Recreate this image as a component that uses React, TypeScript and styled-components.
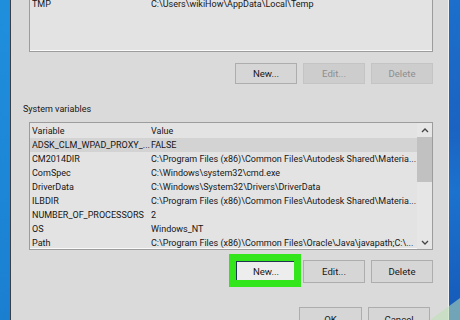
import React from "react";
import styled, { createGlobalStyle } from "styled-components";

const Global = createGlobalStyle`
  html, body { margin: 0; padding: 0; }
  body { width: 460px; height: 320px; overflow: hidden; }
`;

const Screen = styled.div`
  display: flex;
  width: 460px;
  height: 320px;
  overflow: hidden;
  background: #1a6fca;
  font-family: Roboto, "Noto Sans", "Liberation Sans", sans-serif;
  font-size: 9px;
  color: #161616;
  position: relative;
`;

const Desktop = styled.div<{ $w: number; $side: "l" | "r" }>`
  flex: 0 0 ${(p) => p.$w}px;
  background: ${(p) =>
    p.$side === "l"
      ? "linear-gradient(180deg, #1f8fdc 0%, #1d86d6 60%, #1b7fd0 100%)"
      : "linear-gradient(180deg, #1c6fcc 0%, #1a63c2 40%, #1c72cf 60%, #1559b8 100%)"};
`;

const Dialog = styled.div`
  flex: 1;
  display: flex;
  flex-direction: column;
  background: #dadada;
  border-left: 1px solid #3b3f45;
  border-right: 1px solid #f2f2f2;
  padding: 0 15px 0 12px;
  overflow: hidden;
  & > * { flex-shrink: 0; }
`;

const ListBox = styled.div<{ $h: number; $noTop?: boolean; $mt?: number }>`
  position: relative;
  height: ${(p) => p.$h}px;
  margin: ${(p) => p.$mt ?? 0}px 0 0 6px;
  box-sizing: border-box;
  border: 1px solid #9c9c9c;
  border-top: ${(p) => (p.$noTop ? "none" : "1px solid #9c9c9c")};
  box-shadow: inset 0 -1px 0 #fafafa;
  background: #e3e3e3;
  overflow: hidden;
  display: flex;
`;

const Rows = styled.div<{ $offset?: number }>`
  flex: 1;
  display: flex;
  flex-direction: column;
  margin-top: ${(p) => p.$offset ?? 0}px;
  min-width: 0;
  & > * { flex-shrink: 0; }
`;

const Row = styled.div<{ $selected?: boolean; $header?: boolean }>`
  display: grid;
  grid-template-columns: 119px 1fr;
  height: ${(p) => (p.$header ? 15 : 14)}px;
  align-items: center;
  padding-left: 2px;
  background: ${(p) => (p.$selected ? "#d3d3d3" : "transparent")};
  white-space: nowrap;
`;

const Cell = styled.span`
  overflow: hidden;
  white-space: nowrap;
  text-overflow: clip;
`;

const ScrollBar = styled.div`
  flex: 0 0 15px;
  display: flex;
  flex-direction: column;
  align-items: center;
  background: #e6e6e6;
`;

const Arrow = styled.div`
  height: 14px;
  display: flex;
  align-items: center;
  justify-content: center;
`;

const Thumb = styled.div`
  width: 15px;
  height: 45px;
  background: #c1c1c1;
`;

const Spacer = styled.div`
  flex: 1;
`;

const ButtonRow = styled.div<{ $mt: number; $pr?: number }>`
  display: flex;
  justify-content: flex-end;
  gap: 6px;
  margin-top: ${(p) => p.$mt}px;
  padding-right: ${(p) => p.$pr ?? 0}px;
`;

const Button = styled.div<{ $disabled?: boolean; $focus?: boolean; $w?: number; $h?: number }>`
  position: relative;
  box-sizing: border-box;
  width: ${(p) => p.$w ?? 62}px;
  height: ${(p) => p.$h ?? 21}px;
  display: flex;
  align-items: center;
  justify-content: center;
  font-size: 9.6px;
  background: ${(p) => (p.$disabled ? "#cdcdcd" : p.$focus ? "#ededed" : "#d6d6d6")};
  color: ${(p) => (p.$disabled ? "#8e8e8e" : "#161616")};
  border: ${(p) => (p.$focus ? "2px solid #1f3550" : p.$disabled ? "1px solid #c4c4c4" : "1px solid #adadad")};
`;

const Highlight = styled.div`
  position: absolute;
  left: -8px;
  top: -8px;
  right: -6px;
  bottom: -6px;
  border: 7px solid #33e61c;
  pointer-events: none;
`;

const Label = styled.div`
  margin-top: 18px;
  height: 14px;
  line-height: 14px;
`;

const Corner = styled.div`
  position: absolute;
  right: 0;
  bottom: 0;
  width: 0;
  height: 0;
  border-left: 30px solid transparent;
  border-bottom: 22px solid rgba(190, 225, 180, 0.55);
`;

const Chevron = ({ up }: { up?: boolean }) => (
  <svg width="8" height="5" viewBox="0 0 8 5">
    <path
      d={up ? "M1 4 L4 1 L7 4" : "M1 1 L4 4 L7 1"}
      fill="none"
      stroke="#444"
      strokeWidth="1.3"
    />
  </svg>
);

const sysVars: [string, string][] = [
  ["ADSK_CLM_WPAD_PROXY_...", "FALSE"],
  ["CM2014DIR", "C:\\Program Files (x86)\\Common Files\\Autodesk Shared\\Materia..."],
  ["ComSpec", "C:\\Windows\\system32\\cmd.exe"],
  ["DriverData", "C:\\Windows\\System32\\Drivers\\DriverData"],
  ["ILBDIR", "C:\\Program Files (x86)\\Common Files\\Autodesk Shared\\Materia..."],
  ["NUMBER_OF_PROCESSORS", "2"],
  ["OS", "Windows_NT"],
  ["Path", "C:\\Program Files (x86)\\Common Files\\Oracle\\Java\\javapath;C:\\..."],
];

export default function App() {
  return (
    <>
      <Global />
      <Screen>
        <Desktop $w={10} $side="l" />
        <Dialog>
          <ListBox $h={52} $noTop>
            <Rows $offset={-3}>
              <Row>
                <Cell>TMP</Cell>
                <Cell>C:\Users\wikiHow\AppData\Local\Temp</Cell>
              </Row>
            </Rows>
          </ListBox>
          <ButtonRow $mt={11}>
            <Button>New...</Button>
            <Button $disabled>Edit...</Button>
            <Button $disabled>Delete</Button>
          </ButtonRow>
          <Label>System variables</Label>
          <ListBox $h={128} $mt={6}>
            <Rows>
              <Row $header>
                <Cell>Variable</Cell>
                <Cell>Value</Cell>
              </Row>
              {sysVars.map(([k, v], i) => (
                <Row key={k} $selected={i === 0}>
                  <Cell>{k}</Cell>
                  <Cell>{v}</Cell>
                </Row>
              ))}
            </Rows>
            <ScrollBar>
              <Arrow>
                <Chevron up />
              </Arrow>
              <Thumb />
              <Spacer />
              <Arrow>
                <Chevron />
              </Arrow>
            </ScrollBar>
          </ListBox>
          <ButtonRow $mt={10}>
            <Button $focus $h={23}>
              New...
              <Highlight />
            </Button>
            <Button $h={23}>Edit...</Button>
            <Button $h={23}>Delete</Button>
          </ButtonRow>
          <ButtonRow $mt={24} $pr={3}>
            <Button $w={63} $h={24}>OK</Button>
            <Button $w={62} $h={24}>Cancel</Button>
          </ButtonRow>
        </Dialog>
        <Desktop $w={11} $side="r" />
        <Corner />
      </Screen>
    </>
  );
}
